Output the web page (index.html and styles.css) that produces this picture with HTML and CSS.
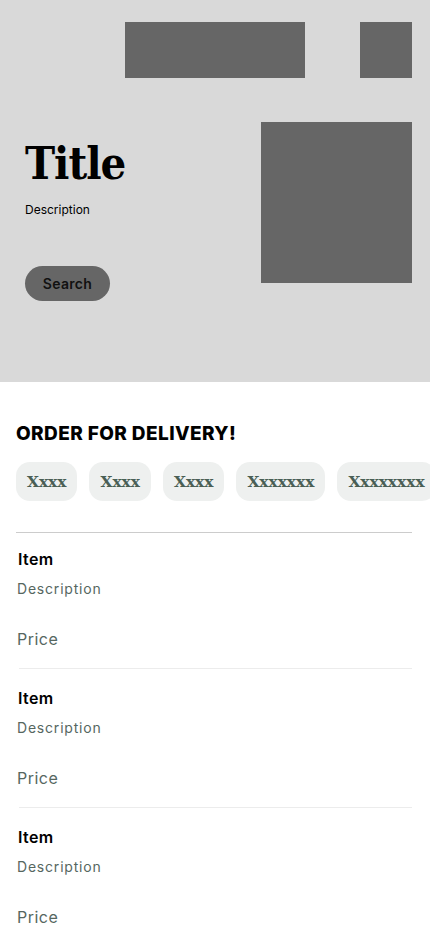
FILE: index.html
```html
<!DOCTYPE html>
<html lang="en">
<head>
<meta charset="utf-8">
<title>Order for delivery</title>
<link rel="stylesheet" href="styles.css">
</head>
<body>
<header class="hero">
  <div class="topbar">
    <div class="ph ph-wide"></div>
    <div class="ph ph-small"></div>
  </div>
  <div class="hero-main">
    <div class="hero-text">
      <h1 class="title">Title</h1>
      <p class="hero-desc">Description</p>
      <button class="search-btn">Search</button>
    </div>
    <div class="ph ph-image"></div>
  </div>
</header>
<main class="menu">
  <h2 class="menu-heading">ORDER FOR DELIVERY!</h2>
  <div class="chips">
    <span class="chip">Xxxx</span>
    <span class="chip">Xxxx</span>
    <span class="chip">Xxxx</span>
    <span class="chip">Xxxxxxx</span>
    <span class="chip">Xxxxxxxx</span>
  </div>
  <hr class="rule">
  <div class="items">
    <div class="item">
      <div class="item-name">Item</div>
      <div class="item-desc">Description</div>
      <div class="item-price">Price</div>
    </div>
    <div class="item">
      <div class="item-name">Item</div>
      <div class="item-desc">Description</div>
      <div class="item-price">Price</div>
    </div>
    <div class="item">
      <div class="item-name">Item</div>
      <div class="item-desc">Description</div>
      <div class="item-price">Price</div>
    </div>
  </div>
</main>
</body>
</html>
```
FILE: styles.css
```css
* { box-sizing: border-box; }
html, body { margin: 0; padding: 0; }
body {
  width: 430px;
  overflow-x: hidden;
  background: #ffffff;
  font-family: Inter, "Noto Sans", sans-serif;
  color: #000;
}

.hero {
  background: #d9d9d9;
  height: 382px;
  padding: 22px 18px 0 25px;
}
.topbar {
  display: flex;
  justify-content: flex-end;
  gap: 55px;
}
.ph { background: #666666; }
.ph-wide { width: 180px; height: 56px; }
.ph-small { width: 52px; height: 56px; }
.hero-main {
  display: flex;
  justify-content: space-between;
  align-items: flex-start;
  margin-top: 44px;
}
.hero-text {
  display: flex;
  flex-direction: column;
  align-items: flex-start;
  padding-top: 19px;
}
.title {
  margin: 0;
  font-family: "DejaVu Serif Condensed", "DejaVu Serif", serif;
  font-stretch: condensed;
  font-weight: 700;
  font-size: 45px;
  line-height: 46px;
  letter-spacing: -1px;
}
.hero-desc {
  margin: 15px 0 0;
  font-size: 12px;
  line-height: 16px;
}
.search-btn {
  margin-top: 48px;
  width: 85px;
  height: 35px;
  border: none;
  border-radius: 18px;
  background: #666666;
  color: #111;
  font-family: Inter, sans-serif;
  font-weight: 600;
  font-size: 14px;
  letter-spacing: 0.3px;
  padding: 0;
}
.ph-image { width: 151px; height: 161px; }

.menu {
  padding: 0 18px 0 16px;
}
.menu-heading {
  margin: 40px 0 0;
  font-size: 19px;
  line-height: 24px;
  font-weight: 800;
  letter-spacing: 0.4px;
}
.chips {
  display: flex;
  gap: 12px;
  margin: 16px -18px 0 0;
  overflow: hidden;
}
.chip {
  flex: none;
  height: 39px;
  padding: 0 11px;
  display: flex;
  align-items: center;
  border-radius: 14px;
  background: #eef0ef;
  color: #4a5f55;
  font-family: "DejaVu Serif", serif;
  font-weight: 700;
  font-size: 15.4px;
}
.rule {
  margin: 31px 0 0;
  border: none;
  height: 1px;
  background: #cccccc;
}
.items {
  display: flex;
  flex-direction: column;
}
.item {
  display: flex;
  flex-direction: column;
  padding-top: 19px;
}
.item:first-child { padding-top: 16px; }
.item::after {
  content: "";
  display: block;
  height: 1px;
  margin-left: 3px;
  background: #ececec;
}
.item-name {
  font-size: 16px;
  line-height: 20px;
  font-weight: 600;
  padding-left: 2px;
  letter-spacing: 0.4px;
}
.item-desc {
  margin-top: 10px;
  padding-left: 1px;
  font-size: 14px;
  line-height: 20px;
  color: #56675f;
  letter-spacing: 0.8px;
}
.item-price {
  margin: 30px 0 19px;
  padding-left: 1px;
  font-size: 16px;
  line-height: 20px;
  color: #56675f;
  letter-spacing: 0.5px;
}
```
